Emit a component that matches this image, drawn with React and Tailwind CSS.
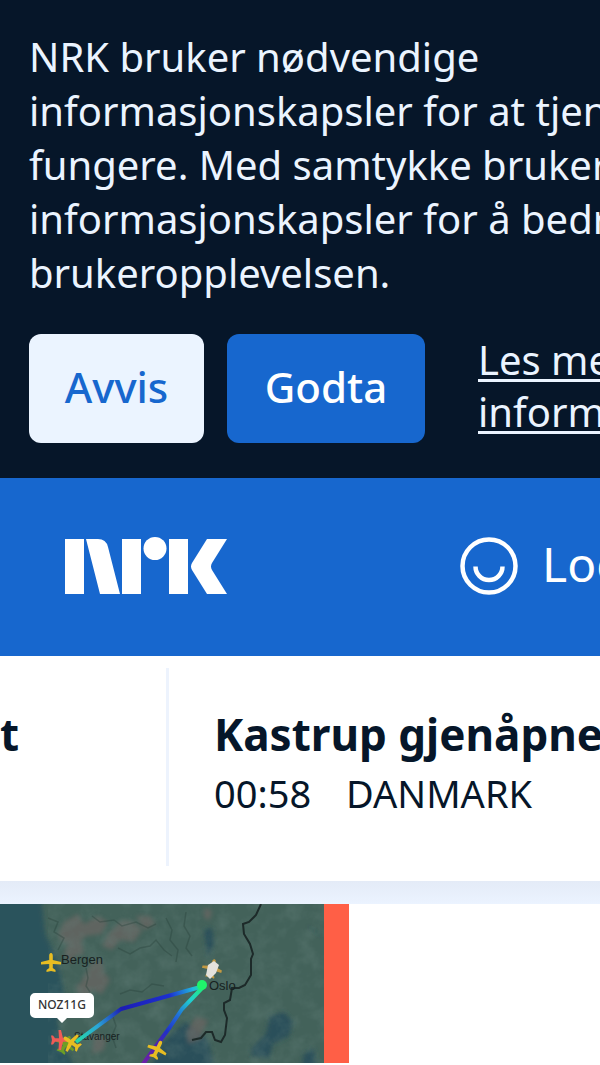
const COOKIE_LINES = [
    'NRK bruker nødvendige',
    'informasjonskapsler for at tjenestene',
    'fungere. Med samtykke bruker vi',
    'informasjonskapsler for å bedre',
    'brukeropplevelsen.',
];

const LAND_PATCHES = [
    'M64 18l14-8 6 10 14-8 10 6-6 12-16 2-10 10-14-4-4-8z',
    'M108 30l14-14 12 2 8 8-8 12-14-2-8 10-10-4z',
    'M92 58l10-2 2 12 6 8-8 14-10-4-6 12-8-6 4-16z',
    'M70 34l12 4 2 12-8 2-6 8-6-10z',
    'M76 82l10-6 4 12-10 10z',
    'M136 12l14 0 6 8-12 6z',
    'M204 4l8 2-2 10-6-2z',
    'M196 112l12 4-8 20-12 4-2-12z',
    'M94 130l12 4-2 12-12 4z',
];

const MOUNTAINS = [
    'M118 44l12 6 10-6 10-2 6-6 8 10 8 6',
    'M92 12l8 6 14-2 8 6 14-4 12 6 8-4',
    'M120 90l10-4 12 2 10-8 12 2',
    'M86 64l2 10-2 8 4 6',
    'M166 14l6 12-2 10 8 10-2 12',
    'M186 8l-2 14 6 10-4 12 6 8',
    'M112 110l4 12-4 10 4 12',
    'M48 14l10 4-4 10 10 6-6 12',
];

function Plane({ x, y, rotate = 0, color = '#e8bd22' }) {
    return (
        <path
            transform={`translate(${x} ${y}) rotate(${rotate})`}
            fill={color}
            d="M0-10c1.400 0 1.800 1.400 1.800 3v4L10-1v2.500L1.800 1v4l2.700 2v2L0 8l-4.500 1V7l2.700-2V1L-10 1.500V-1l8.200-2v-4c0-1.600.4-3 1.800-3z"
        />
    );
}

function NrkLogo() {
    return (
        <svg viewBox="0 0 162 58" className="h-[58px] w-[162px]" fill="#fff" aria-hidden="true">
            <path d="M0 2h19v55H0z" />
            <path d="M21 2h12q8 0 10 8l12 47H35z" />
            <path d="M57 2h19v55H57z" />
            <circle cx="90" cy="11.500" r="11.500" />
            <path d="M104 2h19v55h-19z" />
            <path d="M142 2h20l-15 24q-2 3.500 0 7l15 24h-20l-15-24q-2-3.500 0-7z" />
        </svg>
    );
}

function SmileIcon() {
    return (
        <svg viewBox="0 0 58 58" className="size-[58px] shrink-0" fill="none" stroke="#fff" strokeWidth="4.500" aria-hidden="true">
            <circle cx="29" cy="29" r="26.500" />
            <path d="M15.500 29.500a13.500 13.500 0 0 0 27 0" />
        </svg>
    );
}

function FlightMap() {
    return (
        <svg viewBox="0 0 324 159" className="w-[324px] shrink-0" role="img" aria-label="Flykart over Sør-Norge">
            <defs>
                <filter id="terrain" x="0" y="0" width="100%" height="100%">
                    <feTurbulence type="fractalNoise" baseFrequency="0.06" numOctaves="4" seed="8" />
                    <feColorMatrix values="0 0 0 0 0.13  0 0 0 0 0.22  0 0 0 0 0.2  1.8 0 0 0 -0.7" />
                </filter>
                <filter id="soft" x="-20%" y="-20%" width="140%" height="140%">
                    <feGaussianBlur stdDeviation="2" />
                </filter>
                <linearGradient id="west" gradientUnits="userSpaceOnUse" x1="74" y1="138" x2="204" y2="82">
                    <stop offset="0" stopColor="#25dfa0" />
                    <stop offset="0.2" stopColor="#2aa5d8" />
                    <stop offset="0.4" stopColor="#1c1cb4" />
                    <stop offset="0.75" stopColor="#1d30d0" />
                    <stop offset="0.92" stopColor="#20b8e0" />
                    <stop offset="1" stopColor="#20f070" />
                </linearGradient>
                <linearGradient id="south" gradientUnits="userSpaceOnUse" x1="144" y1="159" x2="204" y2="82">
                    <stop offset="0" stopColor="#6d20a8" />
                    <stop offset="0.25" stopColor="#4a22b0" />
                    <stop offset="0.4" stopColor="#2030c8" />
                    <stop offset="0.6" stopColor="#2070d8" />
                    <stop offset="0.8" stopColor="#20d0d0" />
                    <stop offset="1" stopColor="#20f070" />
                </linearGradient>
            </defs>

            <rect width="324" height="159" fill="#43625a" />
            <g filter="url(#soft)">
                <path d="M-8-8H41L45 30 52 44 60 68 64 88 58 118 62 140 78 170H-8z" fill="#2b525b" />
                <path d="M148 170l14-30 14-14 10-8 12 10 10 8 8 34z" fill="#2b505a" />
                <path d="M252 144l14-14 4-18 14-4 9 10-4 14-16 8-4 14-18-2z" fill="#2b505a" />
                <path d="M204 26l8-2 2 16-6 14zM306 20l10 8 6 6zM304 150l10-6 2 18h-14z" fill="#2b505a" />
            </g>
            <g filter="url(#soft)" fill="#6c6663" opacity="0.7">
                {LAND_PATCHES.map((d) => <path key={d} d={d} />)}
            </g>
            <rect x="48" width="276" height="159" filter="url(#terrain)" opacity="0.4" />
            <g fill="none" stroke="#263f38" strokeWidth="1.500" opacity="0.35">
                {MOUNTAINS.map((d) => <path key={d} d={d} />)}
            </g>
            <path
                d="M261 0l-5 11-7 7-6 2 1 10 6 10 3 10-2 5v16l-6 10-6 3h-7l-2 12-6 3v7l3 8-2 17-4 7-6-2-3-8h-6l-5 6-9 2"
                fill="none"
                stroke="#1d2a29"
                strokeWidth="2"
            />

            <g fontFamily="Liberation Sans, sans-serif" fill="#17211f">
                <text x="61" y="60" fontSize="13">Bergen</text>
                <text x="209" y="86" fontSize="13">Oslo</text>
                <text x="74" y="136" fontSize="10">Stavanger</text>
            </g>

            <path d="M76 138l45-33 83-23" fill="none" stroke="url(#west)" strokeWidth="4" strokeLinejoin="round" />
            <path d="M143 160l27-37 12-18 22-23" fill="none" stroke="url(#south)" strokeWidth="4" strokeLinejoin="round" />
            <circle cx="202" cy="81" r="5" fill="#20f36b" />

            <Plane x={51} y={59} />
            <Plane x={157} y={146} rotate={25} />
            <Plane x={65} y={141} rotate={30} color="#6d9e25" />
            <Plane x={60} y={136} rotate={90} color="#ef5b56" />
            <Plane x={72} y={139} rotate={-55} />
            <Plane x={212} y={65} rotate={15} color="#c39942" />
            <path d="M208 61l6-4 5 4-3 8-6 6-4-4z" fill="#e5e2dc" />

            <path d="M35 89h54a5 5 0 0 1 5 5v15a5 5 0 0 1-5 5H67l-5 5-5-5H35a5 5 0 0 1-5-5V94a5 5 0 0 1 5-5z" fill="#fff" />
            <text x="38" y="105" fontSize="12" fontFamily="Noto Sans, sans-serif" fontWeight="500" fill="#333">NOZ11G</text>
        </svg>
    );
}

function CookieBanner() {
    return (
        <section className="bg-[#061629] pt-[30px] pr-[30px] pb-[35px] pl-[29px] text-[#ebf4ff]">
            <p className="text-[40px] leading-[54px] whitespace-nowrap">
                {COOKIE_LINES.map((line) => <span key={line} className="block">{line}</span>)}
            </p>
            <div className="mt-[34px] flex items-start">
                <button className="h-[109px] w-[175px] shrink-0 rounded-xl bg-[#ebf4ff] pb-1 text-[42px] font-medium text-[#1767ce]">
                    Avvis
                </button>
                <button className="ml-[23px] h-[109px] w-[198px] shrink-0 rounded-xl bg-[#1767ce] pb-1 text-[42px] font-medium text-white">
                    Godta
                </button>
                <a href="#personvern" className="ml-[53px] shrink-0 text-[40px] leading-[52px] whitespace-nowrap underline decoration-3 underline-offset-4">
                    Les mer om<br />informasjonskapsler
                </a>
            </div>
        </section>
    );
}

export default function App() {
    return (
        <div className="overflow-hidden bg-white font-['Noto_Sans',sans-serif] text-[#061629]">
            <CookieBanner />

            <header className="flex h-[178px] items-center justify-between bg-[#1767ce] pb-0.5 pl-[65px] text-white">
                <a href="/" aria-label="NRK"><NrkLogo /></a>
                <a href="#logginn" className="flex w-[140px] items-center gap-6 text-[48px] leading-[60px] whitespace-nowrap">
                    <SmileIcon />
                    <span className="pb-1">Logg inn</span>
                </a>
            </header>

            <section className="flex h-[225px] pt-3 pb-[15px]">
                <article className="w-[169px] shrink-0 border-r-3 border-[#edf3fd] pt-9 text-[44px] leading-[60px] font-bold">
                    <h2>t</h2>
                </article>
                <article className="shrink-0 pt-9 pl-[45px] whitespace-nowrap">
                    <h2 className="text-[44px] leading-[60px] font-bold">Kastrup gjenåpnet</h2>
                    <p className="flex text-[38px] leading-[58px]">
                        <time className="w-[132px]">00:58</time>
                        <span>DANMARK</span>
                    </p>
                </article>
            </section>

            <div className="h-[23px] bg-linear-to-b from-[#e4ebf7] to-[#ebf3ff]" />

            <main className="flex pb-0.5">
                <FlightMap />
                <div className="w-[25px] bg-[#ff5f46]" />
            </main>
        </div>
    );
}
